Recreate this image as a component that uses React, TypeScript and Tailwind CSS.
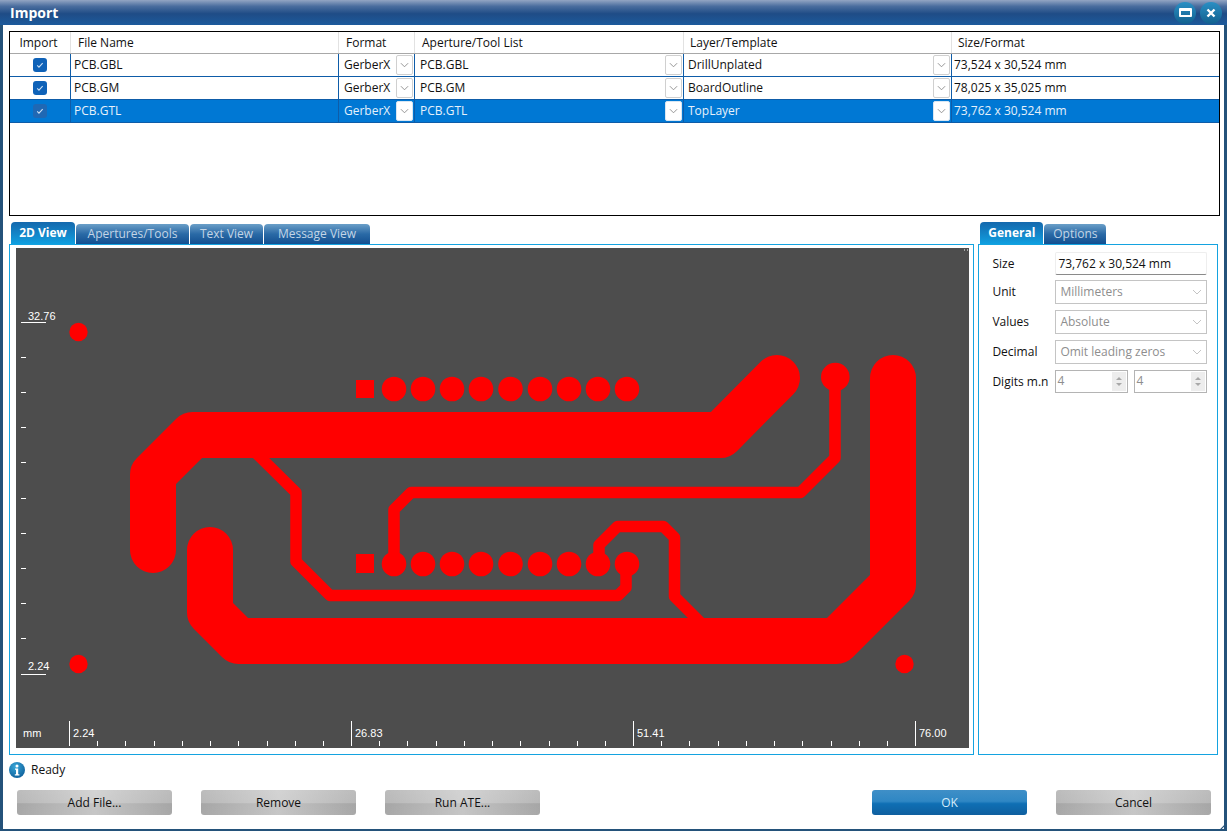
import React from "react";

const font = "font-['Open_Sans','Noto_Sans',sans-serif]";

const rows = [
  { name: "PCB.GBL", aperture: "PCB.GBL", layer: "DrillUnplated", size: "73,524 x 30,524 mm" },
  { name: "PCB.GM", aperture: "PCB.GM", layer: "BoardOutline", size: "78,025 x 35,025 mm" },
  { name: "PCB.GTL", aperture: "PCB.GTL", layer: "TopLayer", size: "73,762 x 30,524 mm", selected: true },
];

const padXs = [394, 423, 452, 481, 510.5, 540, 569, 598, 627];
const leftTicks = [357, 392, 427, 462, 498, 533, 568, 603, 638];
const majorTicks = [
  { x: 69, label: "2.24" },
  { x: 351, label: "26.83" },
  { x: 633, label: "51.41" },
  { x: 915, label: "76.00" },
];
const minorTicks = [
  97, 125, 154, 182, 210, 238, 267, 295, 323, 379, 407, 436, 464, 492, 520, 549, 577, 605, 661, 689, 718, 746, 774, 802,
  831, 859, 887,
];

const Chevron: React.FC<{ className?: string }> = ({ className }) => (
  <svg viewBox="0 0 10 6" className={className} fill="none" stroke="currentColor" strokeWidth="1">
    <path d="M1 1l4 4 4-4" />
  </svg>
);

const RowSelectButton: React.FC<{ selected?: boolean }> = ({ selected }) => (
  <span
    className={`flex h-[20px] w-[17px] shrink-0 items-center justify-center rounded-[2px] border text-[#8a8a8a] ${
      selected ? "border-[#d8e6f2] bg-white" : "border-[#d0d0d0] bg-white"
    }`}
  >
    <Chevron className="h-[6px] w-[9px]" />
  </span>
);

const Check: React.FC<{ selected?: boolean }> = ({ selected }) => (
  <span
    className={`flex h-[14px] w-[14px] items-center justify-center rounded-[3px] ${
      selected ? "bg-[#1f68b4]" : "bg-[#0f62b8]"
    }`}
  >
    <svg viewBox="0 0 10 10" className="h-[8px] w-[8px]" fill="none" stroke="#cfe2f5" strokeWidth="1.3">
      <path d="M1.5 5.5l2.2 2.2 4.6-5" />
    </svg>
  </span>
);

const Tab: React.FC<{ label: string; active?: boolean; width: string }> = ({ label, active, width }) => (
  <div
    className={`flex items-center justify-center rounded-t-[4px] text-[12px] ${width} ${
      active
        ? "h-[22px] bg-gradient-to-b from-[#1468ad] to-[#0f9fe0] font-bold text-white"
        : "h-[20px] bg-gradient-to-b from-[#6a9fc8] via-[#2a6aa6] to-[#124f90] text-[#c3d5e6]"
    }`}
  >
    {label}
  </div>
);

const DisabledSelect: React.FC<{ value: string }> = ({ value }) => (
  <div className="flex h-[24px] w-[152px] items-center justify-between border border-[#c4c4c4] pl-[4px] pr-[4px] text-[12px] text-[#8e8e8e]">
    <span>{value}</span>
    <Chevron className="h-[6px] w-[10px] text-[#c4c4c4]" />
  </div>
);

const Spin: React.FC<{ w: string }> = ({ w }) => (
  <div className={`flex h-[23px] items-center justify-between border border-[#b4b4b4] pl-[1px] pr-[1px] text-[12px] text-[#8e8e8e] ${w}`}>
    <span className="-mt-[2px]">4</span>
    <span className="flex h-[19px] w-[14px] flex-col items-center justify-center gap-[3px] bg-[#ededed]">
      <span className="h-0 w-0 border-x-[3px] border-b-[3px] border-x-transparent border-b-[#a8a8a8]" />
      <span className="h-0 w-0 border-x-[3px] border-t-[3px] border-x-transparent border-t-[#a8a8a8]" />
    </span>
  </div>
);

const ActionButton: React.FC<{ label: string; primary?: boolean }> = ({ label, primary }) => (
  <button
    className={`h-[25px] w-[155px] rounded-[3px] text-[12px] ${
      primary
        ? "bg-[linear-gradient(180deg,#3f8fc7_0%,#2f87c4_45%,#0f6fb4_55%,#0f5f9f_100%)] text-[#d6ecfa]"
        : "bg-[linear-gradient(90deg,rgba(255,255,255,0)_0%,rgba(255,255,255,0.35)_50%,rgba(255,255,255,0)_100%),linear-gradient(180deg,#bcbcbc_0%,#b8b8b8_50%,#a6a6a6_55%,#a8a8a8_100%)] text-[#111]"
    }`}
  >
    {label}
  </button>
);

const PcbCanvas: React.FC = () => (
  <svg viewBox="16 248 953 500" className="block h-[500px] w-[953px]">
    <rect x="16" y="248" width="953" height="500" fill="#4d4d4d" />
    <g fill="none" stroke="#ff0000" strokeLinecap="round" strokeLinejoin="round">
      <path strokeWidth="46" d="M153 550V474.5L192.5 435H720.5L777 378" />
      <path strokeWidth="46" d="M210 550V612.5L238.5 641H836.5L893 584.5V378" />
      <path strokeWidth="11.5" d="M253 450L296 492.5V561.5L330 595.5H618L626 587.5V564" />
      <path strokeWidth="11.5" d="M394 564V509.5L411 492.5H800.5L835 458V377" />
      <path strokeWidth="11.5" d="M599 564V545L617.5 526.5H663.5L674.5 537.5V596.5L703 625" />
    </g>
    <g fill="#ff0000">
      <rect x="356" y="380" width="18" height="18" />
      <rect x="356" y="554" width="18" height="19" />
      {padXs.map((x) => (
        <React.Fragment key={x}>
          <circle cx={x} cy="389" r="12.3" />
          <circle cx={x} cy="564" r="12.3" />
        </React.Fragment>
      ))}
      <circle cx="835.3" cy="377" r="14.3" />
      <circle cx="78.5" cy="332" r="9.2" />
      <circle cx="78.5" cy="664" r="9.2" />
      <circle cx="904.5" cy="664" r="9.2" />
    </g>
    <g stroke="#ffffff" strokeWidth="1">
      <path d="M21 322.5H46M21 674.5H46" />
      {leftTicks.map((y) => (
        <path key={y} d={`M21 ${y + 0.5}H26`} />
      ))}
      {majorTicks.map((t) => (
        <path key={t.x} d={`M${t.x + 0.5} 721V746`} />
      ))}
      {minorTicks.map((x) => (
        <path key={x} d={`M${x + 0.5} 741V746`} />
      ))}
      <path d="M964 250h1M967 250h1" />
    </g>
    <g fill="#ffffff" fontFamily="'Liberation Sans', sans-serif" fontSize="11">
      <text x="28" y="320">32.76</text>
      <text x="28" y="670">2.24</text>
      <text x="23" y="737">mm</text>
      {majorTicks.map((t) => (
        <text key={t.x} x={t.x + 4} y="737">
          {t.label}
        </text>
      ))}
    </g>
  </svg>
);

const App: React.FC = () => {
  return (
    <div className={`relative flex h-[831px] w-[1227px] flex-col overflow-hidden bg-[#24527a] pb-[2px] pl-[3px] pr-[3px] text-[12px] text-[#111] ${font}`}>
      {/* title bar */}
      <div className="-mx-[3px] flex h-[25px] shrink-0 items-center justify-between bg-[linear-gradient(180deg,#93a5c3_0%,#4a6d9e_25%,#1f4c86_55%,#1c5a9c_100%)] pl-[10px] pr-[5px]">
        <span className="text-[14px] font-bold text-white">Import</span>
        <div className="flex items-center gap-[4px]">
          <span className="flex h-[22px] w-[22px] items-center justify-center rounded-full bg-gradient-to-b from-[#2a8fc4] to-[#12618f]">
            <span className="h-[9px] w-[13px] rounded-[1px] border-[2px] border-t-[3px] border-white" />
          </span>
          <span className="flex h-[22px] w-[22px] items-center justify-center rounded-full bg-gradient-to-b from-[#2a8fc4] to-[#12618f]">
            <svg viewBox="0 0 10 10" className="h-[10px] w-[10px]" fill="none" stroke="#fff" strokeWidth="2.4">
              <path d="M1.5 1.5l7 7M8.5 1.5l-7 7" />
            </svg>
          </span>
        </div>
      </div>

      <div className="flex flex-1 flex-col bg-white px-[6px] pt-[6px]">
        {/* file table */}
        <div className="h-[185px] w-[1211px] shrink-0 border border-black bg-white">
          <div className="grid h-[22px] grid-cols-[61px_268px_76px_269px_268px_268px] items-center border-b border-[#a8a8a8] text-[12px]">
            <div className="flex h-full items-center justify-center border-r border-[#e2e2e2] pr-[3px]">Import</div>
            <div className="flex h-full items-center border-r border-[#e2e2e2] pl-[7px]">File Name</div>
            <div className="flex h-full items-center border-r border-[#e2e2e2] pl-[7px]">Format</div>
            <div className="flex h-full items-center border-r border-[#e2e2e2] pl-[7px]">Aperture/Tool List</div>
            <div className="flex h-full items-center border-r border-[#e2e2e2] pl-[6px]">Layer/Template</div>
            <div className="flex h-full items-center pl-[6px]">Size/Format</div>
          </div>
          {rows.map((r) => (
            <div
              key={r.name}
              className={`grid h-[23px] grid-cols-[61px_268px_76px_269px_268px_268px] items-center border-b border-[#0e5ca8] ${
                r.selected ? "bg-[#0078d4] text-[#e6f1fb]" : "text-[#111]"
              }`}
            >
              <div className="flex h-full items-center justify-center border-r border-[#0e5ca8]">
                <Check selected={r.selected} />
              </div>
              <div className="flex h-full items-center border-r border-[#0e5ca8] pl-[3px]">{r.name}</div>
              <div className="flex h-full items-center justify-between border-r border-[#0e5ca8] pl-[5px] pr-[1px]">
                <span>GerberX</span>
                <RowSelectButton selected={r.selected} />
              </div>
              <div className="flex h-full items-center justify-between border-r border-[#0e5ca8] pl-[5px] pr-[1px]">
                <span>{r.aperture}</span>
                <RowSelectButton selected={r.selected} />
              </div>
              <div className="flex h-full items-center justify-between border-r border-[#0e5ca8] pl-[4px] pr-[1px]">
                <span>{r.layer}</span>
                <RowSelectButton selected={r.selected} />
              </div>
              <div className="flex h-full items-center pl-[2px]">{r.size}</div>
            </div>
          ))}
        </div>

        {/* view and properties */}
        <div className="mt-[6px] flex gap-[4px]">
          <div className="w-[967px]">
            <div className="flex h-[22px] items-end gap-[1px] pl-[2px]">
              <Tab label="2D View" active width="w-[64px]" />
              <Tab label="Apertures/Tools" width="w-[113px]" />
              <Tab label="Text View" width="w-[73px]" />
              <Tab label="Message View" width="w-[106px]" />
            </div>
            <div className="h-[511px] border border-[#14a3e0] pl-[6px] pt-[3px]">
              <PcbCanvas />
            </div>
          </div>

          <div className="w-[240px]">
            <div className="flex h-[22px] items-end gap-[1px] pl-[2px]">
              <Tab label="General" active width="w-[63px]" />
              <Tab label="Options" width="w-[62px]" />
            </div>
            <div className="flex h-[511px] flex-col border border-[#14a3e0] pl-[13px] pt-[7px]">
              <div className="flex h-[23px] items-center">
                <span className="w-[63px]">Size</span>
                <div className="flex h-[23px] w-[152px] items-center rounded-[2px] border border-[#eeeeee] border-b-[#8a8a8a] pl-[2px] text-[12px] text-[#111]">
                  73,762 x 30,524 mm
                </div>
              </div>
              <div className="mt-[5px] flex items-center">
                <span className="w-[63px]">Unit</span>
                <DisabledSelect value="Millimeters" />
              </div>
              <div className="mt-[6px] flex items-center">
                <span className="w-[63px]">Values</span>
                <DisabledSelect value="Absolute" />
              </div>
              <div className="mt-[6px] flex items-center">
                <span className="w-[63px]">Decimal</span>
                <DisabledSelect value="Omit leading zeros" />
              </div>
              <div className="mt-[6px] flex items-center">
                <span className="w-[63px] whitespace-nowrap">Digits m.n</span>
                <Spin w="w-[73px]" />
                <span className="w-[6px]" />
                <Spin w="w-[73px]" />
              </div>
            </div>
          </div>
        </div>

        {/* status */}
        <div className="mt-[7px] flex h-[16px] items-center gap-[6px]">
          <svg viewBox="0 0 16 16" className="h-[16px] w-[16px]">
            <defs>
              <radialGradient id="info" cx="40%" cy="30%" r="80%">
                <stop offset="0%" stopColor="#38a6d8" />
                <stop offset="100%" stopColor="#0b5a96" />
              </radialGradient>
            </defs>
            <circle cx="8" cy="8" r="8" fill="url(#info)" />
            <circle cx="8" cy="4" r="1.5" fill="#fff" />
            <path d="M6 6.6h3.2v5.6H10.4v1.2H5.8v-1.2h1.2V7.8H6z" fill="#fff" />
          </svg>
          <span>Ready</span>
        </div>

        {/* buttons */}
        <div className="mt-[12px] flex pl-[8px]">
          <div className="flex gap-[29px]">
            <ActionButton label="Add File..." />
            <ActionButton label="Remove" />
            <ActionButton label="Run ATE..." />
          </div>
          <div className="ml-[332px] flex gap-[29px]">
            <ActionButton label="OK" primary />
            <ActionButton label="Cancel" />
          </div>
        </div>
      </div>

      {/* resize grip */}
      <svg viewBox="0 0 8 8" className="absolute bottom-0 right-0 h-[8px] w-[8px]" fill="none" stroke="#24527a" strokeWidth="1.2">
        <path d="M0 8L8 0M3.5 8L8 3.5" />
      </svg>
    </div>
  );
};

export default App;
